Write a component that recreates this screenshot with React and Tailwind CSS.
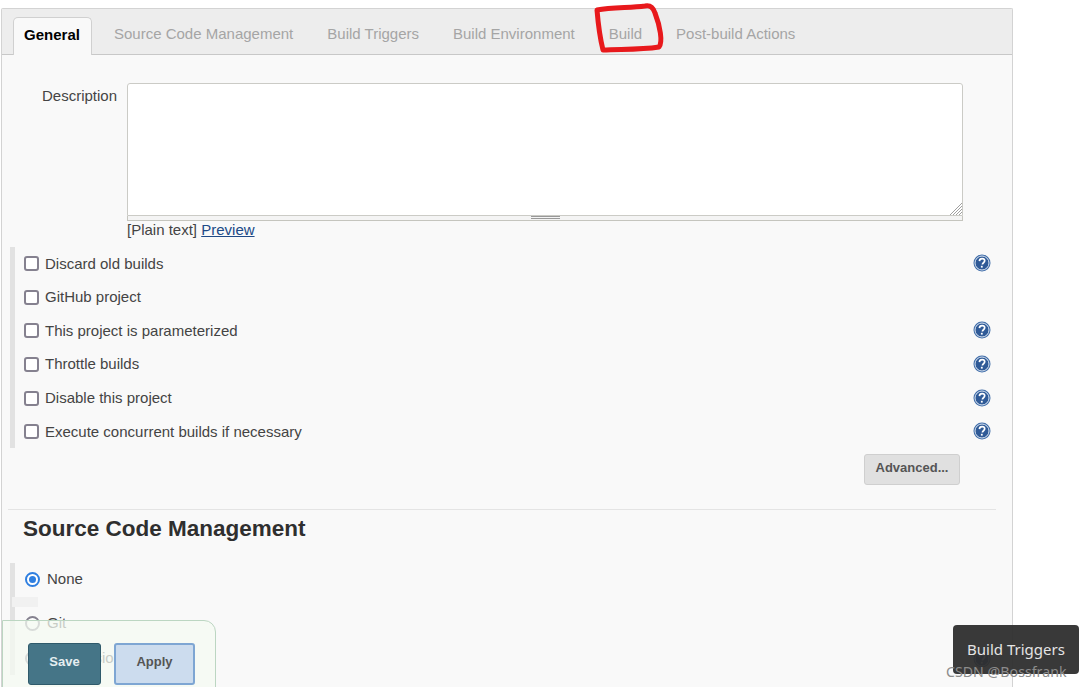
const tabs = ['Source Code Management', 'Build Triggers', 'Build Environment', 'Build', 'Post-build Actions']

const options = [
  { label: 'Discard old builds', help: true },
  { label: 'GitHub project', help: false },
  { label: 'This project is parameterized', help: true },
  { label: 'Throttle builds', help: true },
  { label: 'Disable this project', help: true },
  { label: 'Execute concurrent builds if necessary', help: true },
]

function HelpIcon() {
  return (
    <svg width="18" height="18" viewBox="0 0 18 18" className="shrink-0">
      <circle cx="9" cy="9" r="8.5" fill="#3f6ca8" />
      <circle cx="9" cy="9" r="7" fill="#2f5a97" stroke="#dbe5f2" strokeWidth="1" />
      <path d="M6.4 7.1c.1-1.6 1.2-2.5 2.7-2.5s2.6.9 2.6 2.2c0 1.9-2.3 1.9-2.3 3.6" fill="none" stroke="#fff" strokeWidth="1.7" />
      <rect x="7.9" y="11.8" width="1.8" height="1.8" fill="#fff" />
    </svg>
  )
}

function Checkbox() {
  return <span className="w-[15px] h-[15px] rounded-[3px] border-2 border-[#85818f] bg-white shrink-0" />
}

export default function App() {
  return (
    <div className="relative w-[1083px] h-[687px] overflow-hidden bg-white font-['Liberation_Sans',sans-serif] text-[#333] text-[15px]">
      <div className="ml-px mt-2 w-[1012px] h-[679px] overflow-hidden rounded-t-[2px] border border-b-0 border-[#d3d3d3] bg-[#f9f9f9]">

        {/* Tabs */}
        <div className="h-[46px] flex items-end pl-[11px] bg-[#ededed] border-b border-[#c8c8c8]">
          <div className="relative -mb-px h-[38px] w-[79px] flex items-center justify-center pb-[2px] pr-px bg-[#f9f9f9] border border-b-0 border-[#d0d0d0] rounded-t-[5px] font-bold text-black">
            General
          </div>
          <div className="flex h-[38px] items-center pl-[22px] pb-[2px] gap-[34px] text-[#a5a5a5]">
            {tabs.map((tab) => (
              <span key={tab}>{tab}</span>
            ))}
          </div>
        </div>

        {/* Description */}
        <div className="flex pt-7 pl-[40px]">
          <div className="w-[85px] pt-[4px] leading-[18px] text-[#444]">Description</div>
          <div className="w-[836px]">
            <div className="relative h-[133px] bg-white border border-[#cbcbc6] rounded-t-[3px]">
              <svg width="12" height="12" viewBox="0 0 12 12" className="absolute right-0 bottom-0">
                <path d="M0 12L12 0M3 12L12 3M6 12L12 6M9 12L12 9" stroke="#a0a0a0" strokeWidth="1" />
              </svg>
            </div>
            <div className="h-[5px] flex justify-center bg-[#f4f4f4] border-x border-b border-[#c5c5be]">
              <div className="w-[29px] h-[3px] border-y border-[#999]" />
            </div>
            <div className="leading-[18px] text-[#444]">
              [Plain text] <a className="text-[#204a87] underline">Preview</a>
            </div>
          </div>
        </div>

        {/* Options */}
        <div className="ml-[8px] mt-2 mr-[21px] h-[201px] border-l-[5px] border-[#e2e2e2] pl-[9px]">
          {options.map((opt) => (
            <div key={opt.label} className="h-[33.6px] flex items-center gap-[6px] text-[#444]">
              <Checkbox />
              <span>{opt.label}</span>
              {opt.help && (
                <span className="ml-auto -mt-px">
                  <HelpIcon />
                </span>
              )}
            </div>
          ))}
        </div>

        <div className="flex justify-end mr-[52px] mt-[6px]">
          <button className="w-[96px] h-[31px] pb-[3px] rounded-[3px] bg-[#e0e0e0] border border-[#cfcfcf] text-[13px] font-bold text-[#555]">
            Advanced...
          </button>
        </div>

        <div className="ml-[6px] mr-[16px] mt-6 border-t border-[#e4e4e4]" />

        {/* Source Code Management */}
        <h2 className="ml-[21px] mt-[4px] text-[22.5px] leading-[30px] font-bold text-[#2f2f2f]">Source Code Management</h2>

        <div className="ml-[8px] mt-[19px] mr-[21px] h-[112px] border-l-[5px] border-[#e2e2e2] pl-[10px]">
          <div className="h-[33px] flex items-center gap-[7px] text-[#444]">
            <span className="w-[15px] h-[15px] rounded-full border-2 border-[#2f7fe0] bg-white flex items-center justify-center shrink-0">
              <span className="w-[7px] h-[7px] rounded-full bg-[#2f7fe0]" />
            </span>
            None
          </div>
          <div className="mt-[11px] h-[33px] flex items-center gap-[7px] text-[#444]">
            <span className="w-[15px] h-[15px] rounded-full border-2 border-[#85818f] bg-white shrink-0" />
            Git
          </div>
          <div className="mt-[2px] h-[33px] flex items-center gap-[7px] text-[#444]">
            <span className="w-[15px] h-[15px] rounded-full border-2 border-[#85818f] bg-white shrink-0" />
            Subversion
            <span className="ml-auto">
              <HelpIcon />
            </span>
          </div>
        </div>
      </div>

      {/* Faded strip left over above the save bar */}
      <div className="absolute left-[12px] top-[597px] w-[26px] h-[10px] bg-[#f1f1f1]" />

      {/* Sticky save bar */}
      <div className="absolute left-[2px] top-[620px] w-[214px] h-[80px] rounded-tr-[12px] border border-[#bcd6c2] bg-[#f4f9f1]/75 pt-[22px] pl-[25px] flex items-start gap-[13px]">
        <button className="w-[73px] h-[42px] pb-1 rounded-[3px] bg-[#457587] border border-[#2f5a6b] text-[13px] font-bold text-[#e6eef0]">
          Save
        </button>
        <button className="w-[81px] h-[42px] pb-1 rounded-[3px] bg-[#ccdcee] border-2 border-[#7ea6d3] text-[13px] font-bold text-[#555]">
          Apply
        </button>
      </div>

      {/* Tab tooltip */}
      <div className="absolute left-[953px] top-[625px] w-[126px] h-[49px] rounded-[4px] bg-[#2e2e2e]/95 text-[#e4e4e4] text-[15px] font-['Noto_Sans',sans-serif] flex items-center justify-center">
        Build Triggers
      </div>

      {/* Red hand drawn circle on Build tab */}
      <svg width="80" height="60" viewBox="0 0 80 60" className="absolute left-[590px] top-0">
        <path d="M7 10C8 22 10 38 13 50C30 49 50 50 69 47C73 42 70 26 65 13C63 7 60 5 55 6C40 8 22 7 7 10Z" fill="none" stroke="#e8191c" strokeWidth="5" strokeLinejoin="round" />
      </svg>

      {/* Watermark */}
      <div className="absolute left-[946px] top-[663px] text-[14.2px] leading-[18px] text-[#8c8c8c] font-['Noto_Sans',sans-serif]">
        CSDN @Bossfrank
      </div>
    </div>
  )
}
